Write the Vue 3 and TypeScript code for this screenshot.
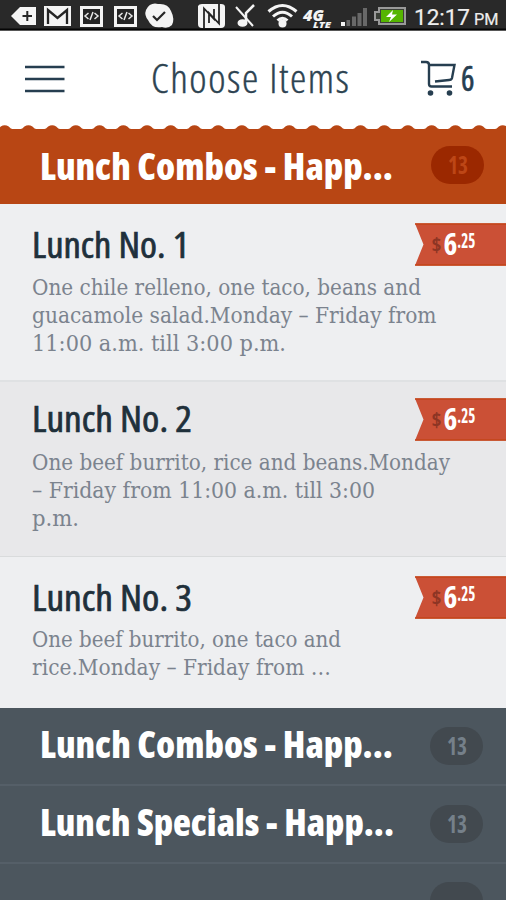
<script setup lang="ts">
interface Line { text: string; width: number }
interface Item { id: number; name: string; nameWidth: number; lines: Line[] }
interface Category { id: string; title: string; width: number; count: number }

const items: Item[] = [
  { id: 1, name: 'Lunch No. 1', nameWidth: 157, lines: [
    { text: 'One chile relleno, one taco, beans and', width: 389 },
    { text: 'guacamole salad.Monday – Friday from', width: 404.5 },
    { text: '11:00 a.m. till 3:00 p.m.', width: 254 },
  ] },
  { id: 2, name: 'Lunch No. 2', nameWidth: 160, lines: [
    { text: 'One beef burrito, rice and beans.Monday', width: 418 },
    { text: '– Friday from 11:00 a.m. till 3:00', width: 343 },
    { text: 'p.m.', width: 47 },
  ] },
  { id: 3, name: 'Lunch No. 3', nameWidth: 160, lines: [
    { text: 'One beef burrito, one taco and', width: 309 },
    { text: 'rice.Monday – Friday from …', width: 299 },
  ] },
]

const active: Category = { id: 'top', title: 'Lunch Combos - Happ...', width: 353, count: 13 }
const others: Category[] = [
  { id: 'combos', title: 'Lunch Combos - Happ...', width: 353, count: 13 },
  { id: 'specials', title: 'Lunch Specials - Happ...', width: 354, count: 13 },
]

const period = 23.72
const scallop = Array.from({ length: 24 }, (_, i) => {
  const x = 4.7 + (i - 1) * period
  return `L${x - 8.5} 4.3Q${x - 6} 4 ${x - 4} 1.5Q${x} -1 ${x + 4} 1.5Q${x + 6} 4 ${x + 8.5} 4.3`
}).join('')
const scallopPath = `M-30 5${scallop}L540 5Z`
</script>

<template>
  <main class="screen">
    <svg class="status" viewBox="0 0 506 31">
      <g fill="#f4f4f4">
        <path d="M11 16 20 7H36V25H20Z" />
        <path d="M44 6H71V26H44Z" />
        <path d="M80 6H103V27H80ZM114 6H137V27H114Z" />
        <path d="M146 10Q150 2 158 4Q168 3 171 11Q175 19 172 25Q168 29 162 27Q152 29 148 20Q144 15 146 10Z" />
        <path d="M198 6Q199 4 202 4H221Q225 4 225 7V24Q225 28 221 28H202Q198 28 198 24Z" />
      </g>
      <g fill="none" stroke="#252525" stroke-width="2">
        <path d="M22.500 16H32M27.300 11V21" />
        <path d="M48 24V10L57.500 18 67 10V24" stroke-width="2.300" />
        <path d="M153 16 157 20 165 12" stroke-width="2.200" />
        <path d="M204 28V8.500L214 19V9M219 4V23.500L209 13V23" stroke-width="1.800" />
      </g>
      <path d="M83 9H100V24H83ZM117 9H134V24H117Z" fill="#252525" />
      <g fill="none" stroke="#e8e8e8" stroke-width="1.500">
        <path d="M88.500 13 85 16 88.500 19M94.500 13 98 16 94.500 19M93 12 90 20" />
        <path d="M122.500 13 119 16 122.500 19M128.500 13 132 16 128.500 19M127 12 124 20" />
      </g>
      <g fill="none" stroke="#f4f4f4">
        <path d="M236 7 253 26" stroke-width="2" />
        <path d="M254 5 246 13V22" stroke-width="2.500" />
        <path d="M268.500 11.500Q282.500-.500 296.500 11.500M273 16.500Q282.500 8 292 16.500M277.500 20.500Q282.500 16 287.500 20.500" stroke-width="3" />
      </g>
      <ellipse cx="242.500" cy="23" rx="5" ry="3.800" fill="#f4f4f4" />
      <circle cx="282.500" cy="23.500" r="4" fill="#f4f4f4" />
      <text class="net" x="303" y="20.500" font-size="15" textLength="21" lengthAdjust="spacingAndGlyphs">4G</text>
      <text class="net" x="313" y="28" font-size="8.500" textLength="18" lengthAdjust="spacingAndGlyphs">LTE</text>
      <path d="M341 22H345V26H341Z" fill="#f4f4f4" />
      <path d="M346.500 20H350V26H346.500ZM352 16.500H356V26H352ZM357.500 13H361.500V26H357.500ZM363 8H367V26H363Z" fill="#686868" />
      <path d="M379 8H405V24H379V20H375V12H379Z" fill="#3b3f38" stroke="#999" stroke-width="2" />
      <path d="M381 10H403V22H381Z" fill="#55b500" />
      <path d="M393 10 386 17H391L389 22 397 14.500H392Z" fill="#fff" />
      <text class="clock" x="414" y="24.500" font-size="22.500" textLength="56" lengthAdjust="spacingAndGlyphs">12:17</text>
      <text class="clock" x="474" y="24.500" font-size="16" textLength="24.500" lengthAdjust="spacingAndGlyphs">PM</text>
    </svg>

    <header class="bar">
      <svg class="menu" viewBox="0 0 40 28"><path d="M0 2H39.500M0 14H39.500M0 26H39.500" /></svg>
      <svg class="title" viewBox="0 0 200 40"><text x="0" y="34.300" textLength="199.500" lengthAdjust="spacingAndGlyphs">Choose Items</text></svg>
      <div class="cart">
        <svg viewBox="0 0 36 36">
          <path d="M1 2H6Q9 2 9 5V24Q9 26.500 11.500 26.500H32M9 5H34.500L32 18Q31.500 20 29 20L15 21.500" />
          <circle cx="10.500" cy="33" r="2.800" /><circle cx="29.500" cy="33" r="2.800" />
        </svg>
        <svg class="qty" viewBox="0 0 14 36"><text x="1" y="31" textLength="13.500" lengthAdjust="spacingAndGlyphs">6</text></svg>
      </div>
    </header>

    <svg class="scallop" viewBox="0 0 506 4"><path :d="scallopPath" /></svg>
    <section class="category active">
      <svg class="cat-title" viewBox="0 0 370 40"><text x="0" y="33.700" :textLength="active.width" lengthAdjust="spacingAndGlyphs">{{ active.title }}</text></svg>
      <span class="badge"><svg viewBox="0 0 20 24"><text x="0" y="21" textLength="20" lengthAdjust="spacingAndGlyphs">{{ active.count }}</text></svg></span>
    </section>

    <article v-for="item in items" :key="item.id" class="item" :class="`item-${item.id}`">
      <div class="row">
        <svg class="name" viewBox="0 0 300 43"><text x="0" y="34.500" :textLength="item.nameWidth" lengthAdjust="spacingAndGlyphs">{{ item.name }}</text></svg>
        <svg class="ribbon" viewBox="0 0 91 43">
          <path class="flag" d="M0 .500H91V42.500H0L8.500 21.500Z" />
          <path class="edge" d="M0 1H91M0 42H91" />
          <text class="dollar" x="16.500" y="29" textLength="10" lengthAdjust="spacingAndGlyphs">$</text>
          <text class="price" x="28.500" y="32.200">6<tspan class="cents" dy="-7.500" textLength="18" lengthAdjust="spacingAndGlyphs">.25</tspan></text>
        </svg>
      </div>
      <div class="desc">
        <svg v-for="line in item.lines" :key="line.text" viewBox="0 0 430 27.8"><text x="0" y="19" :textLength="line.width" lengthAdjust="spacingAndGlyphs">{{ line.text }}</text></svg>
      </div>
    </article>

    <section v-for="cat in others" :key="cat.id" class="category dark">
      <svg class="cat-title" viewBox="0 0 370 40"><text x="0" y="33.700" :textLength="cat.width" lengthAdjust="spacingAndGlyphs">{{ cat.title }}</text></svg>
      <span class="badge"><svg viewBox="0 0 20 24"><text x="0" y="21" textLength="20" lengthAdjust="spacingAndGlyphs">{{ cat.count }}</text></svg></span>
    </section>
    <section class="category dark last"><span class="badge"></span></section>
  </main>
</template>

<style>
body { margin: 0; }
</style>

<style scoped>
.screen { width: 506px; height: 900px; overflow: hidden; background: #fff; font-family: "Open Sans", "Noto Sans", sans-serif; }
svg { display: block; flex: none; overflow: visible; }
.status { width: 506px; height: 31px; background: linear-gradient(#292929 0 28px, #050505 29px 30px, #aaa 31px); }
.net { font-weight: 800; font-style: italic; fill: #f4f4f4; }
.clock { font-family: Roboto, sans-serif; fill: #eee; stroke: #eee; stroke-width: .2; }
.bar { display: flex; box-sizing: border-box; height: 94px; padding: 28px 0 0 25px; }
.menu { width: 40px; height: 28px; margin-top: 6px; }
.menu path { stroke: #263e50; stroke-width: 2.600; }
.title { width: 200px; height: 40px; margin-left: 86px; }
.title text { font-size: 39.500px; font-weight: 300; font-stretch: 75%; letter-spacing: 1.500px; fill: #2d4351; stroke: #2d4351; stroke-width: .4; }
.cart { display: flex; gap: 4px; margin: 1px 0 0 69px; }
.cart svg { width: 36px; height: 36px; }
.cart path { fill: none; stroke: #263e50; stroke-width: 2.400; }
.cart circle { fill: #263e50; }
.cart .qty { width: 14px; }
.qty text { font-size: 35px; font-weight: 400; font-stretch: 75%; fill: #263e50; stroke: #263e50; stroke-width: .6; }
.scallop { width: 506px; height: 4px; }
.scallop path { fill: #b84614; }
.category { display: flex; align-items: flex-start; justify-content: space-between; box-sizing: border-box; padding-left: 40px; padding-right: 23px; }
.cat-title { width: 370px; height: 40px; }
.cat-title text { font-size: 37.500px; font-weight: 800; font-stretch: 75%; fill: #fff; }
.badge { display: flex; align-items: center; justify-content: center; width: 53px; height: 38px; border-radius: 19px; background: #42494f; }
.badge svg { width: 20px; height: 24px; }
.badge text { font-size: 24px; font-weight: 700; font-stretch: 75%; fill: #75808a; }
.active { height: 75px; padding-top: 17px; padding-right: 22px; background: #b84614; }
.active .badge { background: #9b2800; }
.active .badge text { fill: #bd4616; }
.item { box-sizing: border-box; background: #eeeff1; }
.item-1 { height: 178px; padding-top: 19px; border-bottom: 2px solid #dfe1e3; }
.item-2 { height: 175px; padding-top: 16px; border-bottom: 1px solid #d9dbdc; background: #e8e8ea; }
.item-3 { height: 151px; padding-top: 19px; }
.row { display: flex; justify-content: space-between; padding-left: 32px; }
.name { width: 300px; height: 43px; }
.name text { font-size: 36px; font-weight: 400; font-stretch: 75%; fill: #1f303b; stroke: #1f303b; stroke-width: .7; }
.item-2 .name text { transform: translateY(-1px); }
.ribbon { width: 91px; height: 43px; }
.flag { fill: #cb5036; }
.edge { stroke: #c44419; stroke-width: 1.500; }
.ribbon text { font-stretch: 75%; font-weight: 700; fill: #fff; }
.ribbon .dollar { font-size: 20px; fill: #8d3524; }
.ribbon .price { font-size: 29.500px; }
.ribbon .cents { font-size: 21px; }
.desc { padding: 10px 0 0 32px; }
.item-3 .desc { padding-top: 9px; }
.desc svg { width: 430px; height: 27.800px; }
.desc text { font-family: "DejaVu Serif Condensed", "DejaVu Serif", serif; font-size: 21.500px; fill: #7b838e; }
.dark { height: 78px; padding-top: 16px; background: #4c565e; border-bottom: 2px solid #555f68; }
.dark .badge { margin-top: 3px; }
.dark.last { height: 100px; justify-content: flex-end; padding-top: 15px; }
</style>
